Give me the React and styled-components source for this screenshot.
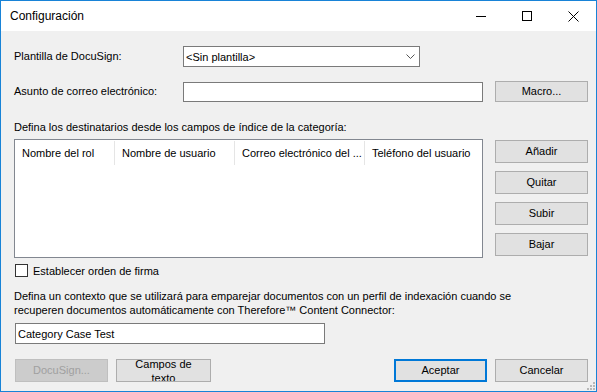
import React from "react";
import styled, { createGlobalStyle, css } from "styled-components";

const Global = createGlobalStyle`
  html, body { margin: 0; padding: 0; background: #ffffff; }
  * { box-sizing: border-box; }
  body { font-family: "Liberation Sans", Arial, sans-serif; font-size: 11px; color: #000; }
`;

const Window = styled.div`
  width: 597px;
  height: 392px;
  border: 1px solid #1883d7;
  display: flex;
  flex-direction: column;
  background: #f0f0f0;
  overflow: hidden;
`;

const TitleBar = styled.div`
  height: 30px;
  background: #ffffff;
  display: flex;
  align-items: center;
  flex: none;
`;

const Title = styled.div`
  flex: 1;
  padding-left: 9px;
  font-size: 12px;
  line-height: 14px;
  color: #000;
`;

const CaptionButton = styled.div`
  width: 46px;
  height: 30px;
  display: flex;
  align-items: center;
  justify-content: center;
`;

const Body = styled.div`
  position: relative;
  flex: 1;
  display: flex;
  flex-direction: column;
  padding: 15px 8px 9px 13px;
`;

const FieldRow = styled.div`
  display: flex;
  align-items: center;
  height: 21px;
  margin-top: ${(p) => p.$mt || 0}px;
`;

const FieldLabel = styled.div`
  width: 169px;
  flex: none;
  line-height: 13px;
`;

const Select = styled.div`
  width: 237px;
  height: 21px;
  border: 1px solid #7a7a7a;
  background: #fff;
  display: flex;
  align-items: center;
  padding-left: 2px;
  padding-right: 4px;
  justify-content: space-between;
`;

const TextBox = styled.div`
  width: ${(p) => p.$w}px;
  height: ${(p) => p.$h || 20}px;
  border: 1px solid #7a7a7a;
  background: #fff;
  display: flex;
  align-items: center;
  padding-left: 2px;
  flex: none;
  margin-top: ${(p) => p.$mt || 0}px;
  margin-left: ${(p) => p.$ml || 0}px;
`;

const Button = styled.div`
  width: ${(p) => p.$w || 93}px;
  height: ${(p) => p.$h || 23}px;
  flex: none;
  background: #e1e1e1;
  border: 1px solid #adadad;
  display: flex;
  align-items: center;
  justify-content: center;
  text-align: center;
  line-height: 13px;
  overflow: hidden;
  color: #000;
  ${(p) =>
    p.$default &&
    css`
      border: 2px solid #0078d7;
    `}
  ${(p) =>
    p.$disabled &&
    css`
      background: #cccccc;
      border-color: #bfbfbf;
      color: #a0a0a0;
    `}
`;

const Spacer = styled.div`
  flex: 1;
`;

const Caption = styled.div`
  margin-top: ${(p) => p.$mt || 0}px;
  line-height: ${(p) => p.$lh || 13}px;
`;

const ListRow = styled.div`
  display: flex;
  margin-top: 5px;
  gap: 12px;
`;

const ListView = styled.div`
  width: 469px;
  height: 119px;
  border: 1px solid #828790;
  background: #fff;
  flex: none;
`;

const HeaderRow = styled.div`
  display: flex;
  height: 25px;
  padding-top: 1px;
`;

const HeaderCell = styled.div`
  width: ${(p) => p.$w}px;
  flex: none;
  height: 24px;
  display: flex;
  align-items: center;
  padding-left: 7px;
  border-right: ${(p) => (p.$last ? "none" : "1px solid #e5e5e5")};
  white-space: nowrap;
  overflow: hidden;
`;

const SideButtons = styled.div`
  display: flex;
  flex-direction: column;
  gap: 8px;
  padding-top: 1px;
`;

const CheckRow = styled.div`
  display: flex;
  align-items: center;
  gap: 5px;
  height: 13px;
  margin-top: 6px;
  margin-left: 1px;
`;

const CheckBox = styled.div`
  width: 13px;
  height: 13px;
  border: 1px solid #333333;
  background: #fff;
  flex: none;
`;

const BottomRow = styled.div`
  display: flex;
  align-items: center;
  margin-top: 15px;
  margin-left: 1px;
  gap: 8px;
`;

const TwoLine = styled.div`
  display: flex;
  flex-direction: column;
  align-items: center;
  line-height: 14px;
  flex: none;
`;

const Grip = styled.svg`
  position: absolute;
  right: 1px;
  bottom: 1px;
`;

export default function App() {
  return (
    <>
      <Global />
      <Window>
        <TitleBar>
          <Title>Configuración</Title>
          <CaptionButton>
            <svg width="10" height="10" viewBox="0 0 10 10">
              <line x1="0" y1="5.5" x2="10" y2="5.5" stroke="#000" strokeWidth="1" />
            </svg>
          </CaptionButton>
          <CaptionButton>
            <svg width="10" height="10" viewBox="0 0 10 10">
              <rect x="0.5" y="0.5" width="9" height="9" fill="none" stroke="#000" strokeWidth="1" />
            </svg>
          </CaptionButton>
          <CaptionButton>
            <svg width="11" height="11" viewBox="0 0 11 11">
              <path d="M0.5 0.5 L10.5 10.5 M10.5 0.5 L0.5 10.5" stroke="#000" strokeWidth="1" fill="none" />
            </svg>
          </CaptionButton>
        </TitleBar>
        <Body>
          <FieldRow>
            <FieldLabel>Plantilla de DocuSign:</FieldLabel>
            <Select>
              <span>&lt;Sin plantilla&gt;</span>
              <svg width="9" height="5" viewBox="0 0 9 5">
                <path d="M0.5 0.5 L4.5 4.5 L8.5 0.5" stroke="#555" strokeWidth="1" fill="none" />
              </svg>
            </Select>
          </FieldRow>
          <FieldRow $mt={14}>
            <FieldLabel>Asunto de correo electrónico:</FieldLabel>
            <TextBox $w={300} />
            <Spacer />
            <Button $h={21}>Macro...</Button>
          </FieldRow>
          <Caption $mt={19}>
            Defina los destinatarios desde los campos de índice de la categoría:
          </Caption>
          <ListRow>
            <ListView>
              <HeaderRow>
                <HeaderCell $w={100}>Nombre del rol</HeaderCell>
                <HeaderCell $w={120}>Nombre de usuario</HeaderCell>
                <HeaderCell $w={130}>Correo electrónico del ...</HeaderCell>
                <HeaderCell $w={117} $last>
                  Teléfono del usuario
                </HeaderCell>
              </HeaderRow>
            </ListView>
            <SideButtons>
              <Button>Añadir</Button>
              <Button>Quitar</Button>
              <Button>Subir</Button>
              <Button>Bajar</Button>
            </SideButtons>
          </ListRow>
          <CheckRow>
            <CheckBox />
            <span>Establecer orden de firma</span>
          </CheckRow>
          <Caption $mt={12} $lh={14}>
            Defina un contexto que se utilizará para emparejar documentos con un perfil de indexación cuando se
            <br />
            recuperen documentos automáticamente con Therefore™ Content Connector:
          </Caption>
          <TextBox $w={310} $h={21} $mt={6} $ml={1}>
            Category Case Test
          </TextBox>
          <BottomRow>
            <Button $disabled>DocuSign...</Button>
            <Button $w={95}>
              <TwoLine>
                <span>Campos de</span>
                <span>texto</span>
              </TwoLine>
            </Button>
            <Spacer />
            <Button $default>Aceptar</Button>
            <Button>Cancelar</Button>
          </BottomRow>
          <Grip width="8" height="8" viewBox="0 0 8 8">
            <g fill="#b8b8b8">
              <rect x="6" y="0" width="2" height="2" />
              <rect x="3" y="3" width="2" height="2" />
              <rect x="6" y="3" width="2" height="2" />
              <rect x="0" y="6" width="2" height="2" />
              <rect x="3" y="6" width="2" height="2" />
              <rect x="6" y="6" width="2" height="2" />
            </g>
          </Grip>
        </Body>
      </Window>
    </>
  );
}
